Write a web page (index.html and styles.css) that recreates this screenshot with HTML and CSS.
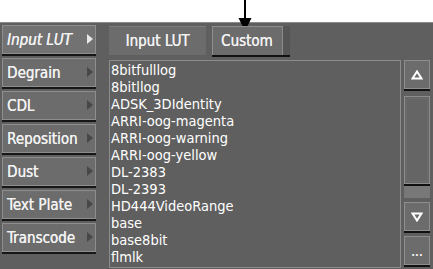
FILE: index.html
```html
<!DOCTYPE html>
<html lang="en">
<head>
    <meta charset="UTF-8">
    <title>Input LUT</title>
    <link rel="stylesheet" href="styles.css">
</head>
<body>
    <div class="top"></div>
    <svg class="pointer" width="16" height="32" viewBox="0 0 16 32">
        <line x1="8" y1="0" x2="8" y2="19" stroke="#000" stroke-width="2"/>
        <polygon points="1.5,18 14.5,18 8,31" fill="#000"/>
    </svg>

    <div class="panel">
        <div class="menu">
            <div class="mbtn active">Input LUT<span class="tri"></span></div>
            <div class="mbtn">Degrain<span class="tri"></span></div>
            <div class="mbtn">CDL<span class="tri"></span></div>
            <div class="mbtn">Reposition<span class="tri"></span></div>
            <div class="mbtn">Dust<span class="tri"></span></div>
            <div class="mbtn">Text Plate<span class="tri"></span></div>
            <div class="mbtn">Transcode<span class="tri"></span></div>
        </div>

        <div class="main">
            <div class="tabs">
                <div class="tab">Input LUT</div>
                <div class="tab custom">Custom<span class="grip"></span></div>
            </div>
            <div class="body">
                <div class="list">
                    <div>8bitfulllog</div>
                    <div>8bitllog</div>
                    <div>ADSK_3DIdentity</div>
                    <div>ARRI-oog-magenta</div>
                    <div>ARRI-oog-warning</div>
                    <div>ARRI-oog-yellow</div>
                    <div>DL-2383</div>
                    <div>DL-2393</div>
                    <div>HD444VideoRange</div>
                    <div>base</div>
                    <div>base8bit</div>
                    <div>flmlk</div>
                </div>
                <div class="scroll">
                    <div class="sbtn">
                        <svg width="12" height="10" viewBox="0 0 12 10"><polygon points="6,1.5 10.5,8.5 1.5,8.5" fill="none" stroke="#fff" stroke-width="2"/></svg>
                    </div>
                    <div class="track">
                        <div class="thumb"></div>
                    </div>
                    <div class="sbtn">
                        <svg width="12" height="10" viewBox="0 0 12 10"><polygon points="1.5,1.5 10.5,1.5 6,8.5" fill="none" stroke="#fff" stroke-width="2"/></svg>
                    </div>
                    <div class="sbtn dots">...</div>
                </div>
            </div>
        </div>
    </div>
</body>
</html>
```
FILE: styles.css
```css
body {
    margin: 0;
    background-color: #fff;
    font-family: "DejaVu Sans Condensed", "DejaVu Sans", sans-serif;
    font-size: 14px;
    color: #f2f2f2;
    width: 433px;
    height: 269px;
    overflow: hidden;
    position: relative;
}
.top {
    height: 22px;
}
.pointer {
    position: absolute;
    left: 237px;
    top: 0;
}
.panel {
    display: flex;
    height: 246px;
    background-color: #5f5f5f;
    border-top: 1px solid #8a8a8a;
}
.menu {
    width: 95px;
    padding: 2px 0 0 2px;
    display: flex;
    flex-direction: column;
    gap: 4px;
}
.mbtn {
    position: relative;
    height: 27px;
    line-height: 28px;
    padding-left: 4px;
    font-size: 15px;
    background-color: #6c6c6c;
    border: 1px solid #8e8e8e;
    box-shadow: 0 2px 0 #161616;
    text-shadow: 0.3px 0 0 #f2f2f2;
}
.mbtn.active {
    font-style: italic;
    background-color: #727272;
}
.tri {
    position: absolute;
    right: 2px;
    top: 8px;
    width: 0;
    height: 0;
    border-top: 5px solid transparent;
    border-bottom: 5px solid transparent;
    border-left: 6px solid #474747;
}
.mbtn.active .tri {
    border-left-color: #e8e8e8;
}
.main {
    flex: 1;
    padding: 3px 3px 0 13px;
    display: flex;
    flex-direction: column;
}
.tabs {
    display: flex;
    gap: 6px;
    height: 29px;
}
.tab {
    width: 97px;
    height: 28px;
    line-height: 29px;
    font-size: 15px;
    text-align: center;
    background-color: #6c6c6c;
    border-top: 1px solid #7c7c7c;
    text-shadow: 0.3px 0 0 #f2f2f2;
}
.custom {
    position: relative;
    width: 61px;
    text-align: left;
    padding-left: 8px;
    border-top: 1px solid #8e8e8e;
    border-left: 1px solid #8e8e8e;
    box-shadow: 0 2px 0 #111;
}
.grip {
    position: absolute;
    left: 69px;
    top: -1px;
    width: 7px;
    height: 29px;
    background-color: #555;
    border-left: 1px solid #8a8a8a;
    box-shadow: 0 2px 0 #111;
}
.body {
    flex: 1;
    display: flex;
    gap: 3px;
    margin-top: 5px;
}
.list {
    width: 289px;
    height: 205px;
    padding: 1px 0 0 1px;
    border: 1px solid #8c8c8c;
    line-height: 17px;
    font-size: 14.5px;
    color: #fff;
    overflow: hidden;
}
.scroll {
    width: 26px;
    display: flex;
    flex-direction: column;
}
.sbtn {
    height: 27px;
    display: flex;
    align-items: center;
    justify-content: center;
    background-color: #6c6c6c;
    border: 1px solid #8e8e8e;
    box-shadow: 0 2px 0 #111;
}
.sbtn + .sbtn {
    margin-top: 5px;
}
.dots {
    font-weight: bold;
    font-size: 11px;
    line-height: 11px;
    padding-top: 4px;
    height: 23px;
}
.track {
    height: 102px;
    margin: 7px 0 4px;
    background-color: #787878;
}
.thumb {
    height: 86px;
    background-color: #656565;
    border: 1px solid #8e8e8e;
    outline: 1px solid #6c6c6c;
    outline-offset: -3px;
    box-shadow: 0 2px 0 #111;
}
```
